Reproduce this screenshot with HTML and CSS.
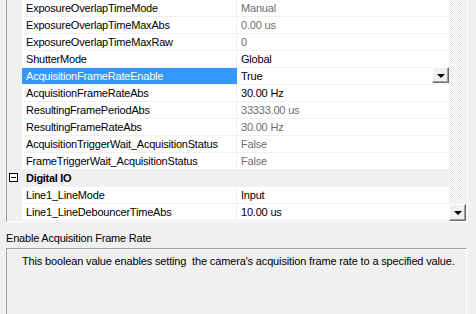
FILE: index.html
```html
<!DOCTYPE html>
<html>
<head>
<meta charset="utf-8">
<link rel="stylesheet" href="styles.css">
</head>
<body>
<div class="grid">
  <div class="rows">
    <div class="row"><div class="gutter"></div><div class="name">ExposureOverlapTimeMode</div><div class="value ro">Manual</div></div>
    <div class="row"><div class="gutter"></div><div class="name">ExposureOverlapTimeMaxAbs</div><div class="value ro">0.00 us</div></div>
    <div class="row"><div class="gutter"></div><div class="name">ExposureOverlapTimeMaxRaw</div><div class="value ro">0</div></div>
    <div class="row"><div class="gutter"></div><div class="name">ShutterMode</div><div class="value">Global</div></div>
    <div class="row selected"><div class="gutter"></div><div class="name">AcquisitionFrameRateEnable</div><div class="value"><span class="vtext">True</span><span class="btn"><span class="tri"></span></span></div></div>
    <div class="row"><div class="gutter"></div><div class="name">AcquisitionFrameRateAbs</div><div class="value">30.00 Hz</div></div>
    <div class="row"><div class="gutter"></div><div class="name">ResultingFramePeriodAbs</div><div class="value ro">33333.00 us</div></div>
    <div class="row"><div class="gutter"></div><div class="name">ResultingFrameRateAbs</div><div class="value ro">30.00 Hz</div></div>
    <div class="row"><div class="gutter"></div><div class="name">AcquisitionTriggerWait_AcquisitionStatus</div><div class="value ro">False</div></div>
    <div class="row"><div class="gutter"></div><div class="name">FrameTriggerWait_AcquisitionStatus</div><div class="value ro">False</div></div>
    <div class="row category"><div class="gutter"><span class="expander"></span></div><div class="cat-name">Digital IO</div></div>
    <div class="row"><div class="gutter"></div><div class="name">Line1_LineMode</div><div class="value">Input</div></div>
    <div class="row"><div class="gutter"></div><div class="name">Line1_LineDebouncerTimeAbs</div><div class="value">10.00 us</div></div>
  </div>
  <div class="vscroll">
    <div class="track"></div>
    <div class="sbtn"><span class="tri"></span></div>
  </div>
</div>
<div class="desc-title">Enable Acquisition Frame Rate</div>
<div class="desc">This boolean value enables setting&nbsp; the camera's acquisition frame rate to a specified value.</div>
</body>
</html>
```

FILE: styles.css
```css
html, body {
  margin: 0;
  padding: 0;
  background: #f0f0f0;
  font-family: "Liberation Sans", Arial, sans-serif;
  font-size: 11px;
  color: #000;
  overflow: hidden;
}
.grid {
  margin-left: 6px;
  width: 460px;
  display: flex;
  border-left: 1px solid #a0a0a0;
  border-right: 1px solid #ffffff;
  border-bottom: 1px solid #ffffff;
}
.rows {
  width: 442px;
  display: flex;
  flex-direction: column;
}
.row {
  display: flex;
  height: 16px;
  border-bottom: 1px solid #f0f0f0;
  line-height: 16px;
  white-space: nowrap;
}
.gutter {
  width: 15px;
  flex: none;
  background: #f0f0f0;
  position: relative;
}
.name {
  width: 210px;
  flex: none;
  padding-left: 4px;
  background: #fff;
  overflow: hidden;
  letter-spacing: -0.2px;
}
.value {
  width: 208px;
  flex: none;
  padding-left: 4px;
  background: #fff;
  border-left: 1px solid #f0f0f0;
  display: flex;
  justify-content: space-between;
  letter-spacing: -0.2px;
}
.value.ro {
  color: #6d6d6d;
}
.selected .name {
  background: #3399ff;
  color: #fff;
}
.selected .value {
  border-left-color: #3399ff;
}
.btn {
  width: 17px;
  height: 16px;
  box-sizing: border-box;
  background: #f0f0f0;
  border-top: 1px solid #fff;
  border-left: 1px solid #fff;
  border-right: 1px solid #696969;
  border-bottom: 1px solid #696969;
  box-shadow: inset -1px -1px 0 #a0a0a0;
  display: flex;
  align-items: center;
  justify-content: center;
  margin-top: -1px;
}
.tri {
  width: 0;
  height: 0;
  border-left: 4px solid transparent;
  border-right: 4px solid transparent;
  border-top: 4px solid #000;
  margin-top: 1px;
}
.category {
  background: #f0f0f0;
}
.cat-name {
  padding-left: 4px;
  font-weight: bold;
  letter-spacing: -0.3px;
}
.expander {
  position: absolute;
  left: 2px;
  top: 3px;
  width: 7px;
  height: 7px;
  border: 1px solid #000;
  background: #fff;
}
.expander::after {
  content: "";
  position: absolute;
  left: 1px;
  top: 3px;
  width: 5px;
  height: 1px;
  background: #000;
}
.vscroll {
  width: 17px;
  display: flex;
  flex-direction: column;
}
.track {
  flex: 1;
  background-color: #fff;
  background-image: conic-gradient(#e6e6e6 25%, #fff 0 50%, #e6e6e6 0 75%, #fff 0);
  background-size: 2px 2px;
}
.sbtn {
  height: 17px;
  box-sizing: border-box;
  background: #f0f0f0;
  border-top: 1px solid #fff;
  border-left: 1px solid #fff;
  border-right: 1px solid #696969;
  border-bottom: 1px solid #696969;
  box-shadow: inset -1px -1px 0 #a0a0a0;
  display: flex;
  align-items: center;
  justify-content: center;
}
.desc-title {
  margin: 10px 0 0 6px;
  height: 13px;
  line-height: 13px;
  letter-spacing: -0.2px;
}
.desc {
  margin: 3px 0 0 6px;
  width: 444px;
  height: 59px;
  border-top: 1px solid #a0a0a0;
  border-left: 1px solid #a0a0a0;
  border-right: 1px solid #fff;
  padding: 6px 0 0 15px;
  line-height: 13px;
  letter-spacing: -0.15px;
  white-space: nowrap;
}
```
